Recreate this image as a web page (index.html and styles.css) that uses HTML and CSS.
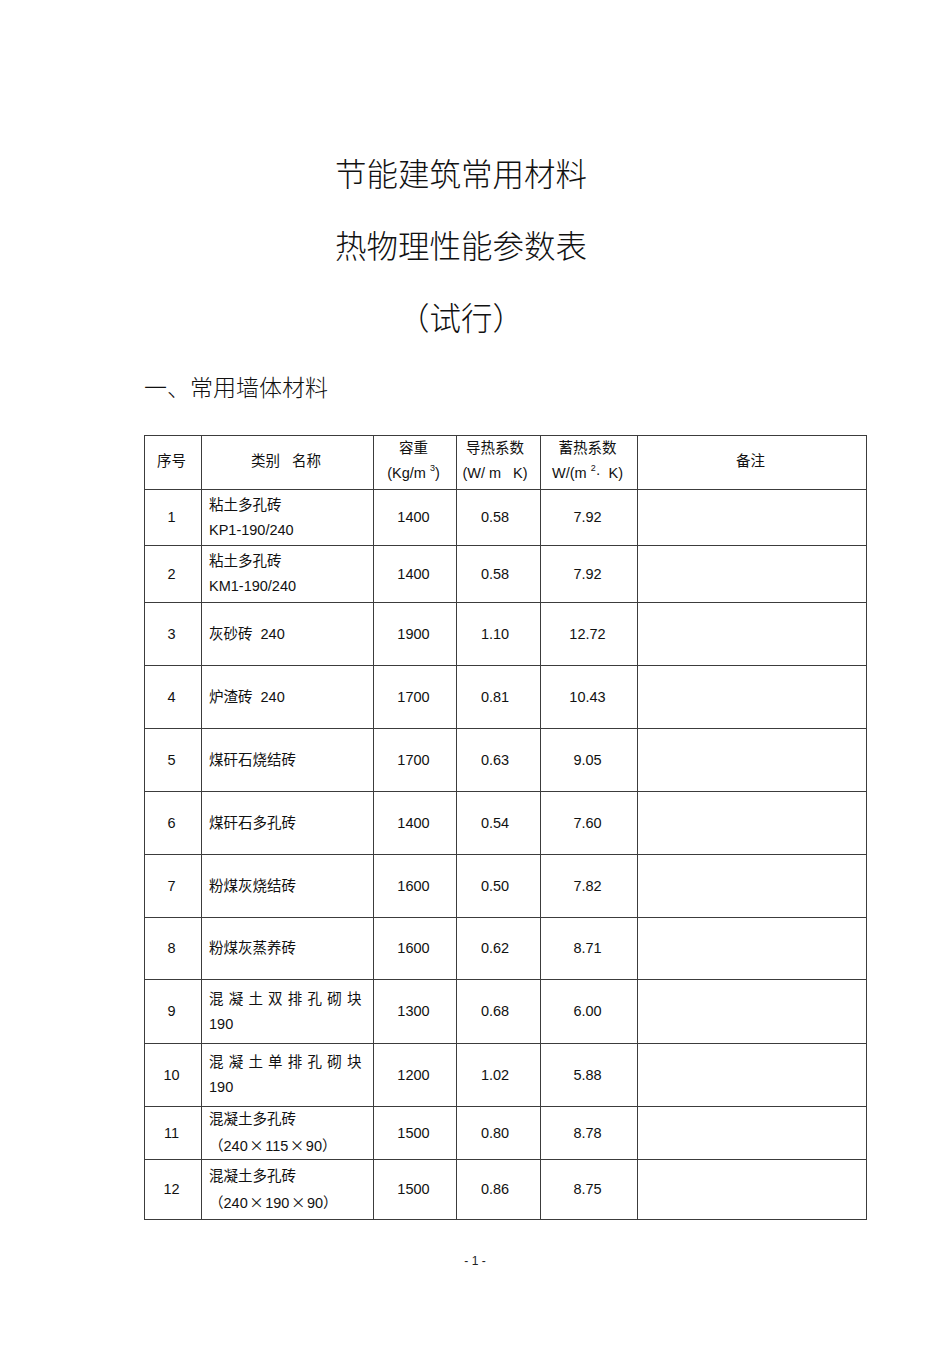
FILE: index.html
```html
<!DOCTYPE html>
<html lang="zh-CN">
<head>
<meta charset="utf-8">
<title>节能建筑常用材料热物理性能参数表</title>
<link rel="stylesheet" href="styles.css">
</head>
<body>
<div class="page">
  <div class="titles">
    <div class="title-line">节能建筑常用材料</div>
    <div class="title-line">热物理性能参数表</div>
    <div class="title-line">（试行）</div>
  </div>
  <h2 class="section">一、常用墙体材料</h2>
  <table class="grid">
    <colgroup>
      <col class="c1"><col class="c2"><col class="c3"><col class="c4"><col class="c5"><col class="c6">
    </colgroup>
    <thead>
      <tr class="head">
        <th>序号</th>
        <th>类别&nbsp;&nbsp;&nbsp;名称</th>
        <th>容重<br>(Kg/m <sup>3</sup>)</th>
        <th class="k">导热系数<br>(W/ m&nbsp;&nbsp;&nbsp;K)</th>
        <th>蓄热系数<br>W/(m <sup>2</sup>·&nbsp;&nbsp;K)</th>
        <th>备注</th>
      </tr>
    </thead>
    <tbody>
      <tr class="r56"><td>1</td><td class="name">粘土多孔砖<br>KP1-190/240</td><td>1400</td><td class="k">0.58</td><td>7.92</td><td></td></tr>
      <tr class="r57"><td>2</td><td class="name">粘土多孔砖<br>KM1-190/240</td><td>1400</td><td class="k">0.58</td><td>7.92</td><td></td></tr>
      <tr class="r63"><td>3</td><td class="name">灰砂砖&nbsp;&nbsp;240</td><td>1900</td><td class="k">1.10</td><td>12.72</td><td></td></tr>
      <tr class="r63"><td>4</td><td class="name">炉渣砖&nbsp;&nbsp;240</td><td>1700</td><td class="k">0.81</td><td>10.43</td><td></td></tr>
      <tr class="r63"><td>5</td><td class="name">煤矸石烧结砖</td><td>1700</td><td class="k">0.63</td><td>9.05</td><td></td></tr>
      <tr class="r63"><td>6</td><td class="name">煤矸石多孔砖</td><td>1400</td><td class="k">0.54</td><td>7.60</td><td></td></tr>
      <tr class="r63"><td>7</td><td class="name">粉煤灰烧结砖</td><td>1600</td><td class="k">0.50</td><td>7.82</td><td></td></tr>
      <tr class="r62"><td>8</td><td class="name">粉煤灰蒸养砖</td><td>1600</td><td class="k">0.62</td><td>8.71</td><td></td></tr>
      <tr class="r64"><td>9</td><td class="name"><span class="spread">混凝土双排孔砌块</span><br>190</td><td>1300</td><td class="k">0.68</td><td>6.00</td><td></td></tr>
      <tr class="r63"><td>10</td><td class="name"><span class="spread">混凝土单排孔砌块</span><br>190</td><td>1200</td><td class="k">1.02</td><td>5.88</td><td></td></tr>
      <tr class="r53"><td>11</td><td class="name">混凝土多孔砖<br>（240<span class="x">×</span>115<span class="x">×</span>90）</td><td>1500</td><td class="k">0.80</td><td>8.78</td><td></td></tr>
      <tr class="r60"><td>12</td><td class="name">混凝土多孔砖<br>（240<span class="x">×</span>190<span class="x">×</span>90）</td><td>1500</td><td class="k">0.86</td><td>8.75</td><td></td></tr>
    </tbody>
  </table>
  <div class="pageno">- 1 -</div>
</div>
</body>
</html>
```

FILE: styles.css
```css
html, body {
  margin: 0;
  padding: 0;
  background: #ffffff;
}

body {
  font-family: "Liberation Sans", "Noto Sans CJK SC", sans-serif;
  color: #111111;
}

.page {
  width: 950px;
  min-height: 1345px;
  box-sizing: border-box;
  padding-top: 136px;
}

.titles {
  padding-right: 28px;
  text-align: center;
  font-family: "Noto Sans CJK SC", sans-serif;
  font-size: 31.5px;
  font-weight: 300;
  color: #111111;
}

.title-line {
  height: 72px;
  line-height: 72px;
}

.section {
  margin: 19px 0 0 0;
  padding: 0 0 0 144px;
  height: 30px;
  line-height: 30px;
  font-family: "Noto Sans CJK SC", sans-serif;
  font-size: 23px;
  font-weight: 300;
  color: #111111;
}

.grid {
  margin: 34px 0 0 144px;
  width: 722px;
  border-collapse: collapse;
  table-layout: fixed;
  font-size: 14.5px;
  line-height: 25px;
}

.c1 { width: 57px; }
.c2 { width: 172px; }
.c3 { width: 83px; }
.c4 { width: 84px; }
.c5 { width: 97px; }
.c6 { width: 229px; }

.grid th,
.grid td {
  border: 1px solid #3c3c3c;
  padding: 0 3px 0 0;
  text-align: center;
  vertical-align: middle;
  font-weight: 400;
}

.grid th.k,
.grid td.k {
  padding-right: 7px;
}

.grid .head th {
  height: 50px;
  line-height: 25px;
  padding-bottom: 3px;
}

.grid sup {
  font-size: 9px;
  line-height: 0;
  vertical-align: 7px;
}

.grid td.name {
  text-align: left;
  padding-left: 7px;
  padding-right: 0;
}

.spread {
  letter-spacing: 5.2px;
}

.x {
  font-family: "Noto Sans CJK SC", sans-serif;
  margin: 0 1.5px;
}

.r53 td { height: 52px; }
.r56 td { height: 55px; }
.r57 td { height: 56px; }
.r60 td { height: 59px; }
.r62 td { height: 61px; }
.r63 td { height: 62px; }
.r64 td { height: 63px; }

.pageno {
  margin-top: 32px;
  text-align: center;
  font-size: 12px;
  line-height: 18px;
  color: #222222;
}
```
